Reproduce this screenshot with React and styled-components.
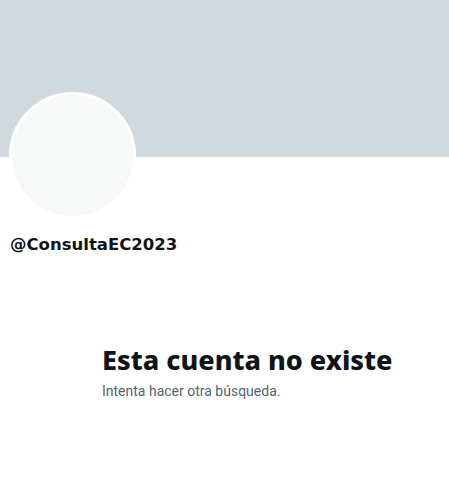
import React from "react";
import styled, { createGlobalStyle } from "styled-components";

export default App;

function App() {
  return (
    <>
      <GlobalStyle />
      <Page>
        <Banner />
        <Header>
          <Avatar />
        </Header>
        <Handle>@ConsultaEC2023</Handle>
        <Empty>
          <Title>Esta cuenta no existe</Title>
          <Hint>Intenta hacer otra búsqueda.</Hint>
        </Empty>
      </Page>
    </>
  );
}

const GlobalStyle = createGlobalStyle`
  body {
    margin: 0;
    background: #ffffff;
    font-family: Roboto, "Noto Sans", sans-serif;
  }
`;

const Page = styled.div`
  width: 449px;
  height: 496px;
  display: flex;
  flex-direction: column;
  overflow: hidden;
`;

const Banner = styled.div`
  height: 157px;
  background: #cfd9de;
`;

const Header = styled.div`
  height: 60px;
  padding-left: 9px;
`;

const Avatar = styled.div`
  width: 121px;
  height: 121px;
  margin-top: -65px;
  border-radius: 50%;
  border: 3px solid #ffffff;
  background: #f7f9f9;
`;

const Handle = styled.div`
  margin: 17px 0 0 10px;
  font-family: "DejaVu Sans", sans-serif;
  font-weight: 700;
  font-size: 16.5px;
  line-height: 21px;
  color: #0f1419;
`;

const Empty = styled.div`
  margin: 87px 0 0 102px;
  display: flex;
  flex-direction: column;
`;

const Title = styled.div`
  font-family: "Noto Sans", sans-serif;
  font-weight: 800;
  font-size: 27px;
  line-height: 36px;
  color: #0f1419;
`;

const Hint = styled.div`
  margin-top: 3px;
  font-family: Roboto, sans-serif;
  font-size: 14px;
  line-height: 20px;
  color: #536471;
`;
